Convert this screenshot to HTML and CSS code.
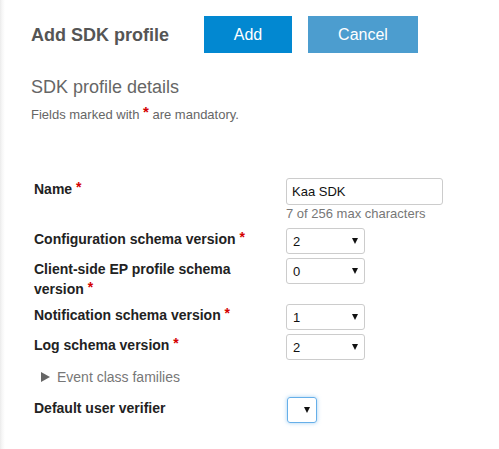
FILE: index.html
```html
<!DOCTYPE html>
<html>
<head>
<meta charset="utf-8">
<link rel="stylesheet" href="styles.css">
</head>
<body>
<div class="page">
  <div class="header">
    <h1 class="title">Add SDK profile</h1>
    <button class="btn btn-primary">Add</button>
    <button class="btn btn-secondary">Cancel</button>
  </div>
  <h2 class="section-title">SDK profile details</h2>
  <p class="hint">Fields marked with <span class="req-big">*</span> are mandatory.</p>

  <div class="form">
    <div class="row">
      <div class="label">Name <span class="req">*</span></div>
      <div class="control">
        <div class="text-input">Kaa SDK</div>
        <div class="helper">7 of 256 max characters</div>
      </div>
    </div>
    <div class="row">
      <div class="label">Configuration schema version <span class="req">*</span></div>
      <div class="control">
        <div class="select"><span>2</span><svg class="arrow" width="6" height="6" viewBox="0 0 6 6"><path d="M0 0H6L3 6Z"/></svg></div>
      </div>
    </div>
    <div class="row">
      <div class="label label-wrap">Client-side EP profile schema version <span class="req">*</span></div>
      <div class="control">
        <div class="select"><span>0</span><svg class="arrow" width="6" height="6" viewBox="0 0 6 6"><path d="M0 0H6L3 6Z"/></svg></div>
      </div>
    </div>
    <div class="row">
      <div class="label">Notification schema version <span class="req">*</span></div>
      <div class="control">
        <div class="select"><span>1</span><svg class="arrow" width="6" height="6" viewBox="0 0 6 6"><path d="M0 0H6L3 6Z"/></svg></div>
      </div>
    </div>
    <div class="row">
      <div class="label">Log schema version <span class="req">*</span></div>
      <div class="control">
        <div class="select"><span>2</span><svg class="arrow" width="6" height="6" viewBox="0 0 6 6"><path d="M0 0H6L3 6Z"/></svg></div>
      </div>
    </div>
    <div class="expander">
      <svg class="tri" width="9" height="10" viewBox="0 0 9 10"><path d="M0 0L9 5L0 10Z"/></svg>
      <span>Event class families</span>
    </div>
    <div class="row">
      <div class="label">Default user verifier</div>
      <div class="control">
        <div class="select select-small focused"><span></span><svg class="arrow" width="6" height="6" viewBox="0 0 6 6"><path d="M0 0H6L3 6Z"/></svg></div>
      </div>
    </div>
  </div>
</div>
</body>
</html>
```

FILE: styles.css
```css
* { box-sizing: border-box; }
html, body { margin: 0; padding: 0; }
body {
  font-family: "Liberation Sans", Arial, sans-serif;
  background: linear-gradient(to right, #ebebeb 0, #f6f6f6 2px, #ffffff 5px);
  width: 499px;
  height: 449px;
  overflow: hidden;
}
.page {
  padding: 16px 0 0 31px;
}
.header {
  display: flex;
  align-items: center;
  height: 37px;
}
.title {
  margin: 0;
  font-size: 18px;
  font-weight: bold;
  color: #555555;
  width: 173px;
  line-height: 22px;
}
.btn {
  height: 37px;
  border: none;
  color: #ffffff;
  font-family: "Liberation Sans", Arial, sans-serif;
  font-size: 16px;
  padding: 0;
  margin: 0;
}
.btn-primary {
  width: 88px;
  background: #0288d1;
  margin-right: 16px;
}
.btn-secondary {
  width: 110px;
  background: #4c9dcf;
}
.section-title {
  margin: 23px 0 0 0;
  font-size: 18px;
  font-weight: normal;
  color: #666666;
  line-height: 22px;
}
.hint {
  margin: 8px 0 0 0;
  font-size: 13px;
  line-height: 17px;
  color: #666666;
}
.req-big {
  color: #d40000;
  font-weight: bold;
  font-size: 15px;
  line-height: 10px;
  vertical-align: 2px;
}
.form {
  margin-top: 55px;
  padding-left: 3px;
}
.row {
  display: flex;
  align-items: flex-start;
  margin-bottom: 4px;
}
.label {
  width: 252px;
  font-size: 14px;
  font-weight: bold;
  line-height: 20px;
  color: #222222;
  padding: 1px 30px 0 0;
}
.label-wrap {
  padding-right: 50px;
  padding-bottom: 1px;
}
.req {
  color: #d40000;
  vertical-align: 2px;
  line-height: 10px;
}
.control {
  display: flex;
  flex-direction: column;
}
.text-input {
  width: 157px;
  height: 27px;
  border: 1px solid #cccccc;
  border-radius: 3px;
  font-size: 13px;
  line-height: 25px;
  padding-left: 5px;
  color: #111111;
}
.helper {
  margin-top: 1px;
  margin-bottom: 2px;
  font-size: 13px;
  line-height: 16px;
  color: #777777;
}
.select {
  width: 79px;
  height: 26px;
  border: 1px solid #cccccc;
  border-radius: 3px;
  display: flex;
  align-items: center;
  justify-content: space-between;
  padding: 0 6px 0 6px;
  font-size: 13px;
  color: #111111;
}
.arrow { fill: #111111; }
.select-small {
  width: 30px;
  margin-left: 1px;
}
.focused {
  border-color: #66afe9;
  box-shadow: 0 0 4px rgba(102, 175, 233, 0.6);
}
.expander {
  display: flex;
  align-items: center;
  margin: 7px 0 10px 7px;
  height: 20px;
  font-size: 14px;
  color: #777777;
}
.tri {
  fill: #666666;
  margin-right: 7px;
}
```
